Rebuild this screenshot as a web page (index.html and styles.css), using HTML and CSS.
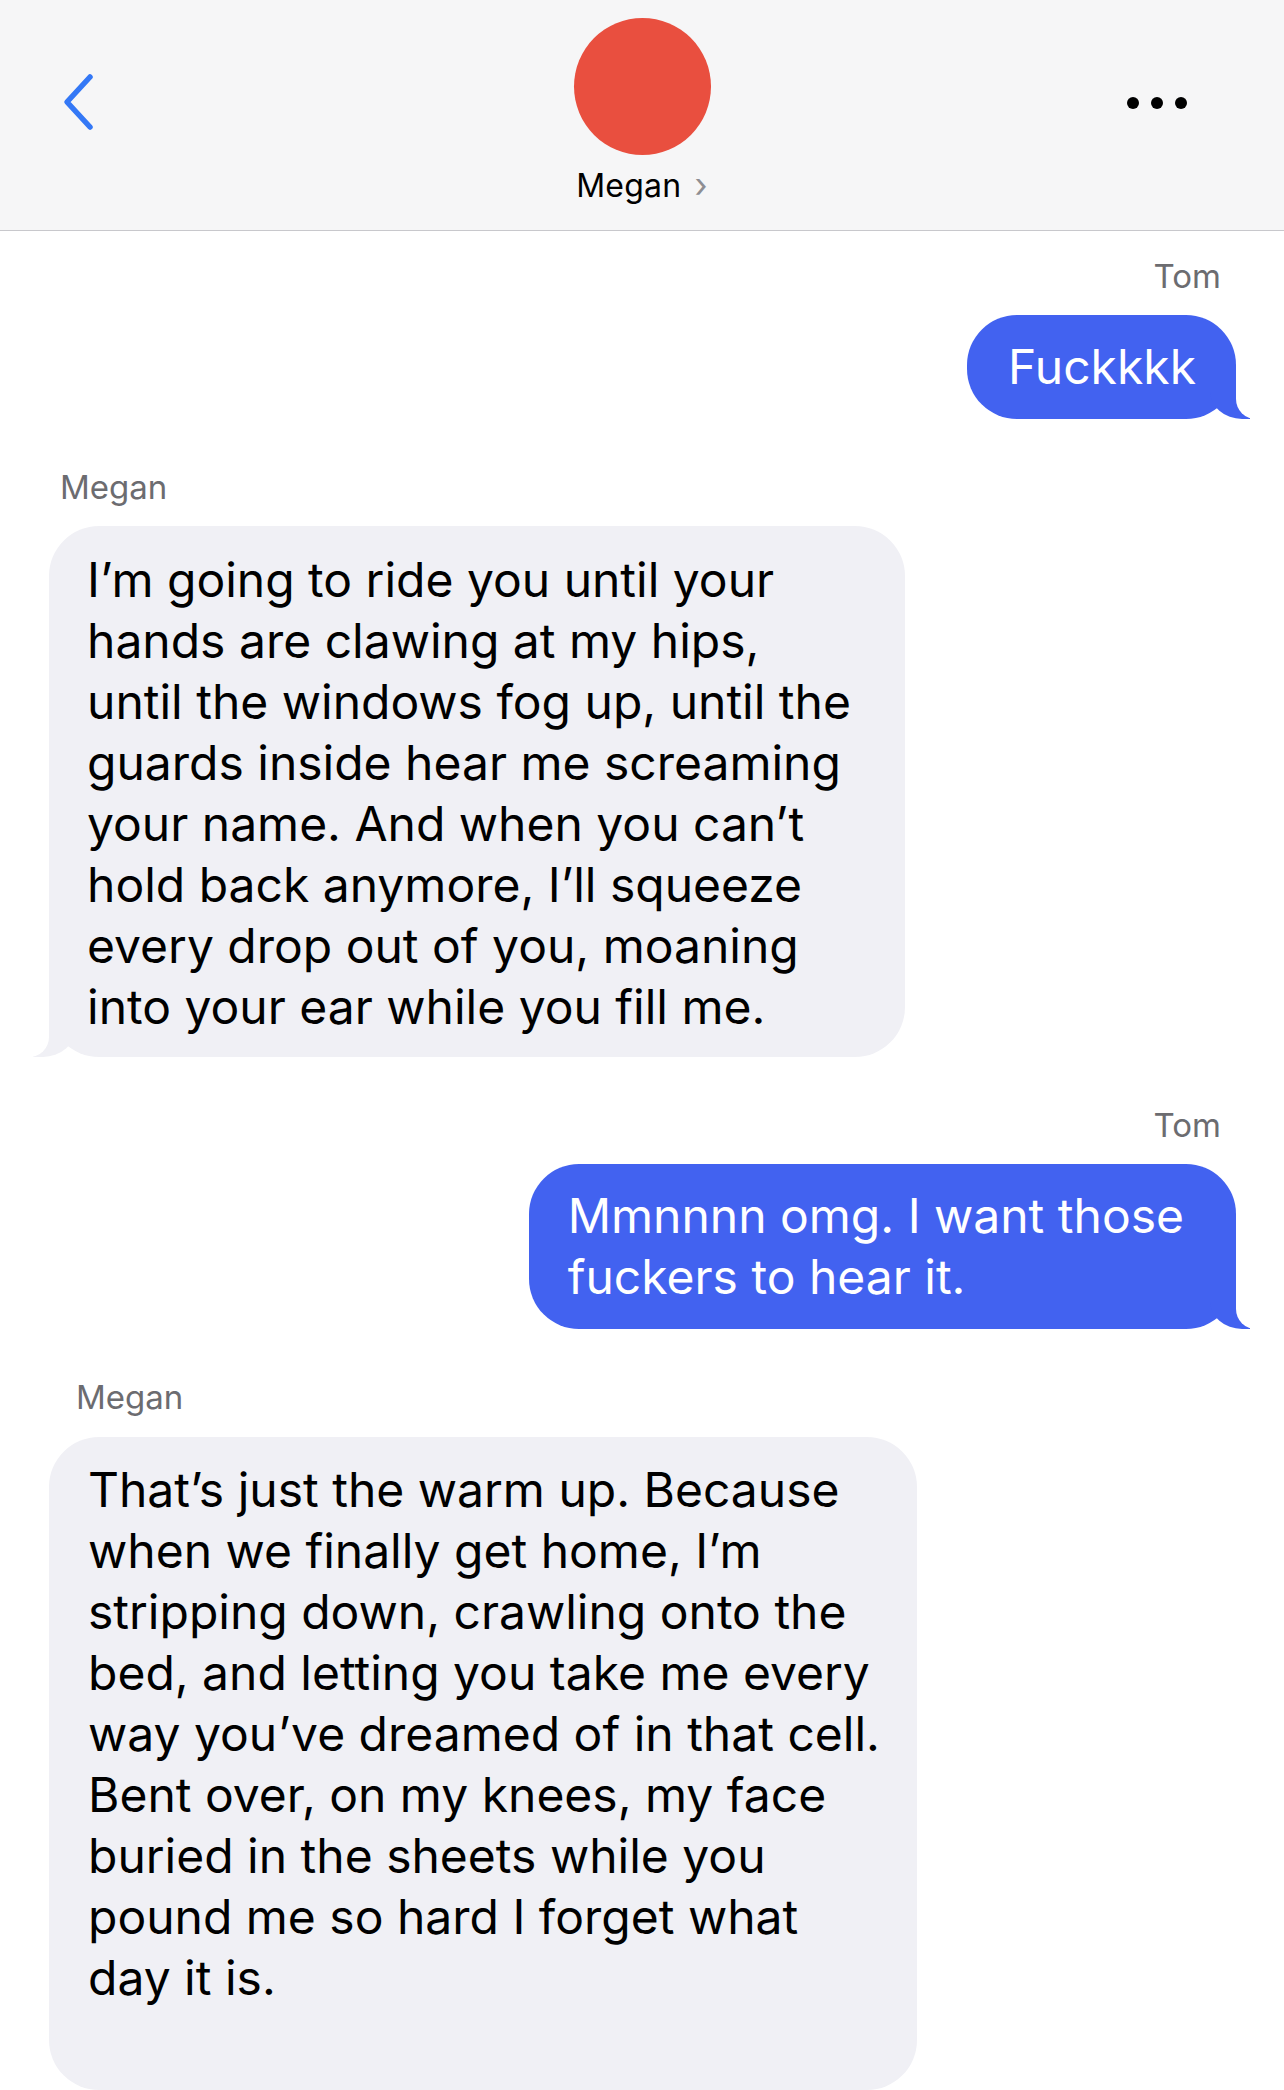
FILE: index.html
```html
<html lang="en">
<head>
  <meta charset="UTF-8" />
  <meta name="viewport" content="width=device-width, initial-scale=1.0" />
  <title>Megan</title>
  <link rel="stylesheet" href="styles.css">
</head>
<body>
  <header class="topbar">
    <a class="back" href="#">
      <svg width="40" height="60" viewBox="0 0 40 60">
        <path d="M29 4 L6 29 L29 54" fill="none" stroke="#3478f6" stroke-width="5.5" stroke-linecap="round" stroke-linejoin="round" />
      </svg>
    </a>
    <div class="contact">
      <div class="avatar"></div>
      <div class="contact-name">Megan <span class="chev">&#x203A;</span></div>
    </div>
    <div class="more">
      <span class="dot"></span><span class="dot"></span><span class="dot"></span>
    </div>
  </header>

  <main class="thread">
    <div class="group sent first">
      <div class="sender">Tom</div>
      <div class="bubble out tail">Fuckkkk</div>
    </div>

    <div class="group received">
      <div class="sender">Megan</div>
      <div class="bubble in tail">I’m going to ride you until your<br>hands are clawing at my hips,<br>until the windows fog up, until the<br>guards inside hear me screaming<br>your name. And when you can’t<br>hold back anymore, I’ll squeeze<br>every drop out of you, moaning<br>into your ear while you fill me.</div>
    </div>

    <div class="group sent">
      <div class="sender">Tom</div>
      <div class="bubble out tail wide">Mmnnnn omg. I want those<br>fuckers to hear it.</div>
    </div>

    <div class="group received">
      <div class="sender indent">Megan</div>
      <div class="bubble in last">That’s just the warm up. Because<br>when we finally get home, I’m<br>stripping down, crawling onto the<br>bed, and letting you take me every<br>way you’ve dreamed of in that cell.<br>Bent over, on my knees, my face<br>buried in the sheets while you<br>pound me so hard I forget what<br>day it is.</div>
    </div>
  </main>
</body>
</html>
```

FILE: styles.css
```css
body {
  margin: 0;
  background: #fff;
  font-family: Inter, "Liberation Sans", sans-serif;
  color: #000;
}
.topbar {
  display: grid;
  grid-template-columns: 1fr auto 1fr;
  align-items: start;
  height: 230px;
  background: #f6f6f7;
  border-bottom: 1px solid #c8c8cc;
  box-sizing: content-box;
}
.back {
  margin: 73px 0 0 61px;
  display: block;
  width: 40px;
}
.contact {
  display: flex;
  flex-direction: column;
  align-items: center;
  padding-top: 18px;
}
.avatar {
  width: 137px;
  height: 137px;
  border-radius: 50%;
  background: #e94f3f;
}
.contact-name {
  margin-top: 11px;
  font-size: 32px;
  line-height: 38px;
  letter-spacing: 0.2px;
}
.chev {
  color: #8e8e93;
  font-size: 34px;
  margin-left: 4px;
}
.more {
  justify-self: end;
  margin: 97px 97px 0 0;
  display: flex;
  gap: 12px;
}
.dot {
  width: 12px;
  height: 12px;
  border-radius: 50%;
  background: #000;
}
.thread {
  padding: 0 48px 0 49px;
}
.group {
  display: flex;
  flex-direction: column;
  margin-top: 50px;
}
.group.first {
  margin-top: 27px;
}
.sent {
  align-items: flex-end;
}
.received {
  align-items: flex-start;
}
.sender {
  font-size: 33px;
  line-height: 36px;
  color: #6c6c70;
  margin-bottom: 21px;
}
.sent .sender {
  margin-right: 15px;
}
.received .sender {
  margin-left: 11px;
}
.received .sender.indent {
  margin-left: 27px;
  margin-bottom: 22px;
}
.bubble {
  position: relative;
  font-size: 48px;
  line-height: 61px;
  border-radius: 50px;
  letter-spacing: 0;
}
.out {
  background: #4262f0;
  color: #fff;
  padding: 21px 40px 22px 41px;
}
.out.wide {
  padding: 21px 52px 22px 39px;
}
.in {
  background: #f0f0f5;
  padding: 23px 54px 20px 38px;
}
.in.last {
  padding: 22px 37px 82px 39px;
}
.tail::before,
.tail::after {
  content: "";
  position: absolute;
  bottom: 0;
  height: 50px;
}
.out.tail::before {
  right: -14px;
  width: 40px;
  background: #4262f0;
  border-bottom-left-radius: 32px 28px;
}
.out.tail::after {
  right: -54px;
  width: 54px;
  background: #fff;
  border-bottom-left-radius: 20px;
}
.in.tail::before {
  left: -16px;
  width: 42px;
  background: #f0f0f5;
  border-bottom-right-radius: 32px 28px;
}
.in.tail::after {
  left: -56px;
  width: 56px;
  background: #fff;
  border-bottom-right-radius: 20px;
}
```
